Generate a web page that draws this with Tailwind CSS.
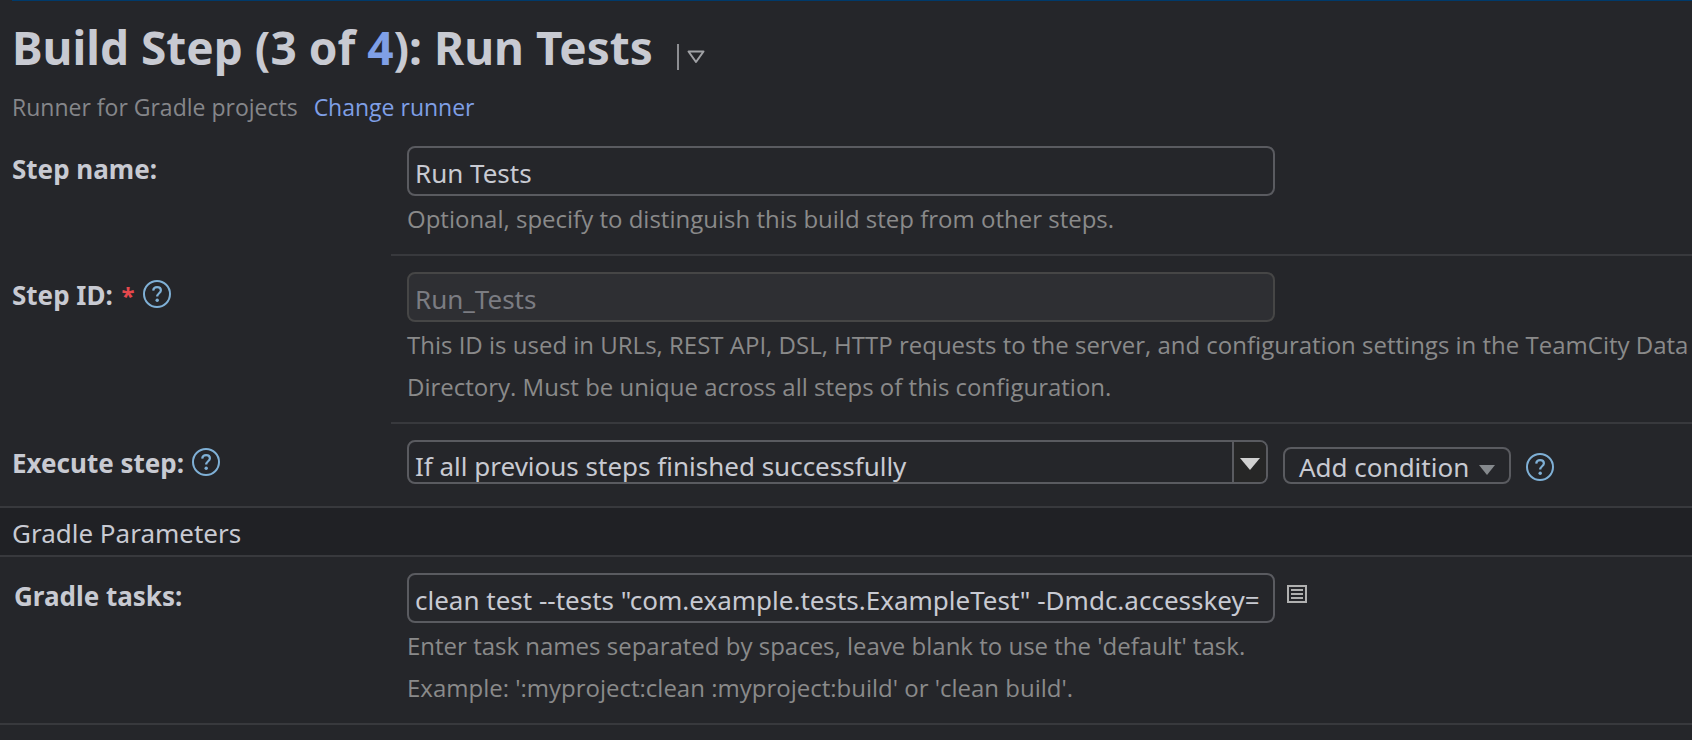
<!DOCTYPE html>
<html lang="en">
<head>
    <title>Build Step: Run Tests</title>
    <meta charset="UTF-8" />
    <meta name="viewport" content="width=device-width, initial-scale=1.0"/>
    <script src="https://cdn.jsdelivr.net/npm/@tailwindcss/browser@4"></script>
</head>
<body class="min-h-screen bg-[#25262a] font-['Noto_Sans','Open_Sans',sans-serif] text-[26px] text-[#c8cad2]">

    <!-- Header -->
    <header class="ml-3 border-t border-[#003a6b] pt-[15px] pb-0.5">
        <div class="flex items-center">
            <h1 class="text-[46px] leading-[62px] font-bold">Build Step (3 of <a href="#" class="text-[#7f9fe6]">4</a>): Run Tests</h1>
            <button type="button" aria-label="Step actions" class="mt-5 ml-6 flex h-[26px] items-center border-l-2 border-[#8d8e92] pl-2">
                <svg class="h-[14px] w-[18px]" viewBox="0 0 18 14" fill="none" stroke="#a0a1a5" stroke-width="2" stroke-linejoin="round"><path d="M1.5 1.5h15L9 12z"/></svg>
            </button>
        </div>
        <p class="mt-2 flex gap-4 font-['Open_Sans',sans-serif] text-[23px] leading-[42px] text-[#85868a]">
            Runner for Gradle projects
            <a href="#" class="text-[#7f9fe6]">Change runner</a>
        </p>
    </header>

    <form>
        <!-- Step name -->
        <div class="grid grid-cols-[391px_1fr]">
            <label for="step-name" class="pt-4 pl-3 leading-[46px] font-bold">Step name:</label>
            <div class="border-b-2 border-[#38393d] pt-4 pl-4">
                <input id="step-name" type="text" value="Run Tests" class="block h-[50px] w-full max-w-[868px] rounded-lg border-2 border-[#5a5b60] px-1.5 pt-1">
                <p class="pt-0.5 pb-3.5 font-['Open_Sans',sans-serif] text-[24px] leading-[42px] text-[#8a8a8a]">Optional, specify to distinguish this build step from other steps.</p>
            </div>
        </div>

        <!-- Step ID -->
        <div class="grid grid-cols-[391px_1fr]">
            <div class="flex items-start pt-4 pl-3">
                <label for="step-id" class="leading-[46px] font-bold">Step ID: <span class="ml-0.5 text-[24px] text-[#e5484d]">*</span></label>
                <a href="#" aria-label="About the step ID" class="ml-2 flex h-11 items-center">
                    <svg class="size-7" viewBox="0 0 28 28" fill="none" stroke="#7fb0d6" stroke-width="2"><circle cx="14" cy="14" r="13"/><path d="M10.2 10.6c.2-2.3 1.7-3.5 3.9-3.5s3.8 1.3 3.8 3.2c0 2.9-3.7 3-3.7 6.2" stroke-width="2.2"/><circle cx="14.2" cy="20.3" r="1.7" fill="#7fb0d6" stroke="none"/></svg>
                </a>
            </div>
            <div class="border-b-2 border-[#38393d] pt-4 pl-4">
                <input id="step-id" type="text" value="Run_Tests" disabled class="block h-[50px] w-full max-w-[868px] rounded-lg border-2 border-[#464646] bg-[#2e2f33] px-1.5 pt-1 text-[#7b7c82]">
                <p class="pt-0.5 pb-3.5 font-['Open_Sans',sans-serif] text-[24px] leading-[42px] text-[#8a8a8a]">This ID is used in URLs, REST API, DSL, HTTP requests to the server, and configuration settings in the TeamCity Data Directory. Must be unique across all steps of this configuration.</p>
            </div>
        </div>

        <!-- Execute step -->
        <div class="grid grid-cols-[391px_1fr] items-start border-b-2 border-[#38393d] pt-4 pb-5">
            <div class="flex items-start pl-3">
                <label for="execute-step" class="leading-[46px] font-bold">Execute step:</label>
                <a href="#" aria-label="About step execution" class="ml-2 flex h-11 items-center">
                    <svg class="size-7" viewBox="0 0 28 28" fill="none" stroke="#7fb0d6" stroke-width="2"><circle cx="14" cy="14" r="13"/><path d="M10.2 10.6c.2-2.3 1.7-3.5 3.9-3.5s3.8 1.3 3.8 3.2c0 2.9-3.7 3-3.7 6.2" stroke-width="2.2"/><circle cx="14.2" cy="20.3" r="1.7" fill="#7fb0d6" stroke="none"/></svg>
                </a>
            </div>
            <div class="flex items-end pl-4">
                <div class="relative w-full max-w-[861px]">
                    <select id="execute-step" class="block h-11 w-full appearance-none rounded-lg border-2 border-[#5a5b60] px-1.5 pt-1.5 leading-9">
                        <option>If all previous steps finished successfully</option>
                        <option>Only if build status is successful</option>
                        <option>Always, even if build stop command was issued</option>
                    </select>
                    <span class="pointer-events-none absolute inset-y-0.5 right-0.5 flex w-[34px] items-center justify-center rounded-r-md border-l-2 border-[#5a5b60] bg-[#262626]">
                        <svg class="mt-1 h-3 w-5" viewBox="0 0 20 12" fill="#d0d0d0"><path d="M0 0h20L10 12z"/></svg>
                    </span>
                </div>
                <button type="button" class="ml-[15px] flex h-[37px] shrink-0 items-center gap-2.5 rounded-lg border-2 border-[#5a5b60] px-3.5 pt-0.5 leading-8">
                    Add condition
                    <svg class="mt-1.5 h-[10px] w-4" viewBox="0 0 16 10" fill="#85898d"><path d="M0 0h16L8 10z"/></svg>
                </button>
                <a href="#" aria-label="About conditions" class="ml-[15px] flex h-[34px] items-center">
                    <svg class="size-7" viewBox="0 0 28 28" fill="none" stroke="#7fb0d6" stroke-width="2"><circle cx="14" cy="14" r="13"/><path d="M10.2 10.6c.2-2.3 1.7-3.5 3.9-3.5s3.8 1.3 3.8 3.2c0 2.9-3.7 3-3.7 6.2" stroke-width="2.2"/><circle cx="14.2" cy="20.3" r="1.7" fill="#7fb0d6" stroke="none"/></svg>
                </a>
            </div>
        </div>

        <!-- Gradle parameters -->
        <h2 class="border-b-2 border-[#38393d] bg-[#202125] pt-1 pl-3 leading-[43px]">Gradle Parameters</h2>
        <div class="grid grid-cols-[391px_1fr] border-b-2 border-[#38393d] pt-4">
            <label for="gradle-tasks" class="pl-3.5 leading-[46px] font-bold">Gradle tasks:</label>
            <div class="pl-4">
                <div class="flex">
                    <input id="gradle-tasks" type="text" value="clean test --tests &quot;com.example.tests.ExampleTest&quot; -Dmdc.accesskey=" class="block h-[50px] w-full max-w-[868px] rounded-lg border-2 border-[#5a5b60] px-1.5 pt-1">
                    <button type="button" aria-label="Expand field" class="mt-3 ml-3 h-[18px] shrink-0">
                        <svg class="h-[18px] w-5" viewBox="0 0 20 18" fill="none" stroke="#b0b0b0" stroke-width="2"><path d="M1 1h18v16H1zM4 5h12M4 9h12M4 13h12"/></svg>
                    </button>
                </div>
                <p class="pt-0.5 pb-3.5 font-['Open_Sans',sans-serif] text-[24px] leading-[42px] text-[#8a8a8a]">Enter task names separated by spaces, leave blank to use the 'default' task.<br>Example: ':myproject:clean :myproject:build' or 'clean build'.</p>
            </div>
        </div>
    </form>
</body>
</html>
